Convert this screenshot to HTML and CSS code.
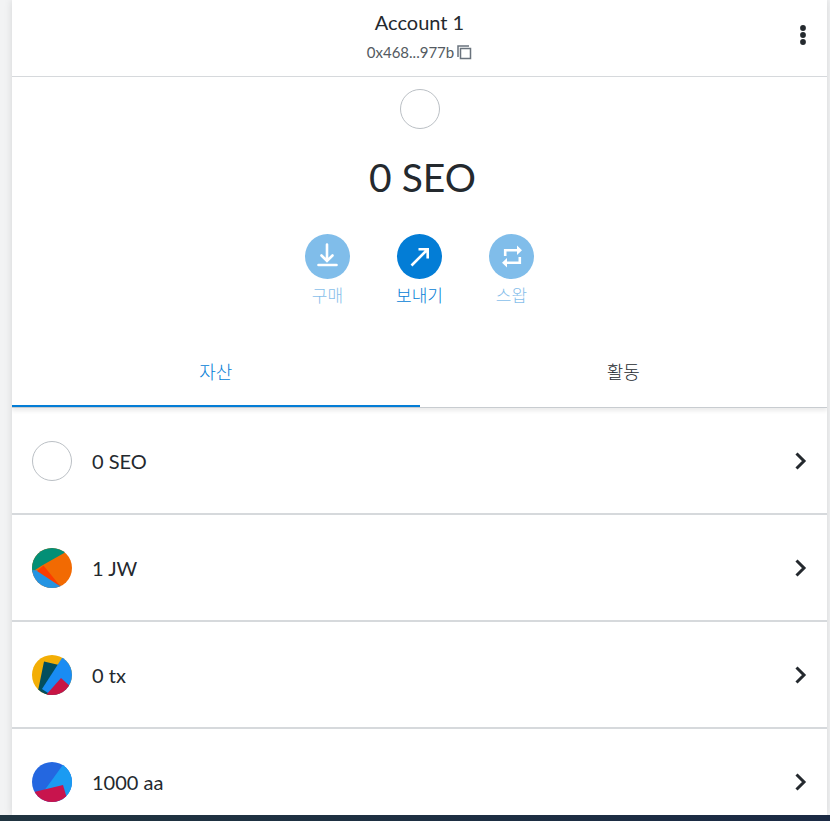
FILE: index.html
```html
<!DOCTYPE html>
<html lang="ko">
<head>
<meta charset="utf-8">
<meta name="viewport" content="width=device-width, initial-scale=1">
<title>Account 1</title>
<link rel="stylesheet" href="styles.css">
</head>
<body>
<main class="wallet">
  <header class="menu-bar">
    <div class="account">
      <h1 class="account-name">Account 1</h1>
      <button class="address" type="button">0x468...977b
        <svg width="15" height="15" viewBox="0 0 15 15" fill="none" stroke="#6a737d" aria-hidden="true"><path d="M1 12V1H12" stroke-width="1.5"/><path d="M3.500 3.500H13.500V13.500H3.500Z" stroke-width="1.500"/></svg>
      </button>
    </div>
    <button class="options" type="button" aria-label="옵션">
      <svg width="6" height="20" viewBox="0 0 6 20" fill="#24292e"><circle cx="3" cy="3" r="2.900"/><circle cx="3" cy="10" r="2.900"/><circle cx="3" cy="17" r="2.900"/></svg>
    </button>
  </header>

  <section class="overview">
    <span class="token-ring"></span>
    <p class="balance">0 SEO</p>
    <div class="actions">
      <button class="action" type="button" disabled>
        <span class="action-icon"><svg width="45" height="45" viewBox="0 0 45 45" fill="none" stroke="#fff" stroke-width="2.600" stroke-linecap="round"><path d="M22 10.500V26M16.500 21.500L22 27L27.500 21.500"/><path d="M13.500 31H31.500"/></svg></span>
        구매
      </button>
      <button class="action" type="button">
        <span class="action-icon"><svg width="45" height="45" viewBox="0 0 45 45" fill="none" stroke="#fff" stroke-width="2.600"><path d="M14.500 31.500L30.500 15.500M21.500 15.300H30.700V24.500"/></svg></span>
        보내기
      </button>
      <button class="action" type="button" disabled>
        <span class="action-icon"><svg width="45" height="45" viewBox="0 0 45 45" fill="none" stroke="#fff" stroke-width="2.600"><path d="M16.200 22V16.200H28M30.800 23V28.800H18"/><path d="M28 11.500L33 16.200L28 20.900ZM18 24L13 28.800L18 33.500Z" fill="#fff" stroke="none"/></svg></span>
        스왑
      </button>
    </div>
  </section>

  <nav class="tabs">
    <button class="tab tab-active" type="button">자산</button>
    <button class="tab" type="button">활동</button>
  </nav>

  <ul class="assets">
    <li><button class="asset" type="button">
      <span class="token-ring"></span>
      <span class="asset-amount">0 SEO</span>
      <svg class="chevron" width="12" height="18" viewBox="0 0 12 18"><path d="M1.500 1.500L9 9L1.500 16.500"/></svg>
    </button></li>
    <li><button class="asset" type="button">
      <svg class="avatar" width="40" height="40" viewBox="0 0 40 40"><rect width="40" height="40" fill="#f26a02"/><path d="M0 0H40L33 4.500L10 17.500L0 24Z" fill="#038f76"/><path d="M0 22L6 22.500L29 38V40H0Z" fill="#2594e2"/><path d="M5 23L11.500 17.500L28.500 38.500Z" fill="#fc3d00"/></svg>
      <span class="asset-amount">1 JW</span>
      <svg class="chevron" width="12" height="18" viewBox="0 0 12 18"><path d="M1.500 1.500L9 9L1.500 16.500"/></svg>
    </button></li>
    <li><button class="asset" type="button">
      <svg class="avatar" width="40" height="40" viewBox="0 0 40 40"><rect width="40" height="40" fill="#f3ae05"/><path d="M12 6.500L27 10L22 40H5L7 31Z" fill="#034e5e"/><path d="M31 1.500L40 8V40H19L10 34Z" fill="#198cf3"/><path d="M29 23L40 33V40H14Z" fill="#c81544"/></svg>
      <span class="asset-amount">0 tx</span>
      <svg class="chevron" width="12" height="18" viewBox="0 0 12 18"><path d="M1.500 1.500L9 9L1.500 16.500"/></svg>
    </button></li>
    <li><button class="asset" type="button">
      <svg class="avatar" width="40" height="40" viewBox="0 0 40 40"><rect width="40" height="40" fill="#2467e0"/><path d="M33 0H40V40H30L12 29Z" fill="#1a9bf2"/><path d="M0 30.500L31 23L36 40H0Z" fill="#c8144d"/></svg>
      <span class="asset-amount">1000 aa</span>
      <svg class="chevron" width="12" height="18" viewBox="0 0 12 18"><path d="M1.500 1.500L9 9L1.500 16.500"/></svg>
    </button></li>
  </ul>
</main>
<footer class="dock"></footer>
</body>
</html>
```
FILE: styles.css
```css
* {
  box-sizing: border-box;
}

body {
  display: flex;
  flex-direction: column;
  height: 100vh;
  margin: 0;
  overflow: hidden;
  background: #f2f3f4;
  color: #24292e;
  font-family: Lato, "Noto Sans CJK KR", sans-serif;
}

button {
  padding: 0;
  border: 0;
  background: none;
  color: inherit;
  font: inherit;
  cursor: pointer;
}

.wallet {
  flex: 1;
  min-height: 0;
  margin: 0 3px 0 12px;
  overflow: hidden;
  background: #fff;
  box-shadow: 0 0 8px rgba(0, 0, 0, 0.12);
}

.dock {
  height: 6px;
  background: linear-gradient(90deg, #203440, #1b2a44);
}

.menu-bar {
  display: grid;
  grid-template-columns: 1fr auto 1fr;
  align-items: center;
  height: 77px;
  border-bottom: 1px solid #d6d9dc;
}

.account {
  grid-column: 2;
  display: flex;
  flex-direction: column;
  align-items: center;
  gap: 6px;
  padding-bottom: 6px;
}

.account-name {
  margin: 0;
  font-size: 20px;
  font-weight: 400;
  line-height: 28px;
}

.address {
  display: flex;
  align-items: center;
  gap: 3px;
  color: #535a61;
  font-size: 15px;
  line-height: 20px;
}

.options {
  justify-self: end;
  display: flex;
  margin-right: 21px;
  padding-bottom: 6px;
}

.overview {
  display: flex;
  flex-direction: column;
  align-items: center;
  padding: 12px 0 30px;
}

.token-ring {
  width: 40px;
  height: 40px;
  border: 1px solid #bbc0c5;
  border-radius: 50%;
}

.balance {
  margin: 20px 0 29px;
  padding-left: 6px;
  font-size: 39px;
  line-height: 56px;
}

.actions {
  display: flex;
  gap: 32px;
}

.action {
  display: flex;
  flex-direction: column;
  align-items: center;
  gap: 5px;
  width: 60px;
  color: #037dd6;
  font-size: 17px;
  font-weight: 300;
  line-height: 24px;
}

.action:disabled {
  opacity: 0.5;
  cursor: default;
}

.action-icon {
  display: flex;
  border-radius: 50%;
  background: #037dd6;
}

.tabs {
  display: flex;
  height: 70px;
  border-bottom: 1px solid #c8ccd0;
  box-shadow: 0 3px 4px rgba(0, 0, 0, 0.08);
}

.tab {
  flex: 1;
  padding-bottom: 2px;
  border-bottom: 2px solid transparent;
  font-size: 18px;
  font-weight: 300;
}

.tab-active {
  border-color: #037dd6;
  color: #037dd6;
}

.assets {
  margin: 0;
  padding: 0;
  list-style: none;
}

.asset {
  display: flex;
  align-items: center;
  gap: 20px;
  width: 100%;
  height: 107px;
  padding: 0 20px;
  border-bottom: 2px solid #d6d9dc;
  text-align: left;
}

.avatar {
  border-radius: 50%;
}

.asset-amount {
  flex: 1;
  font-size: 20px;
  line-height: 28px;
}

.chevron {
  fill: none;
  stroke: #24292e;
  stroke-width: 3;
}
```
